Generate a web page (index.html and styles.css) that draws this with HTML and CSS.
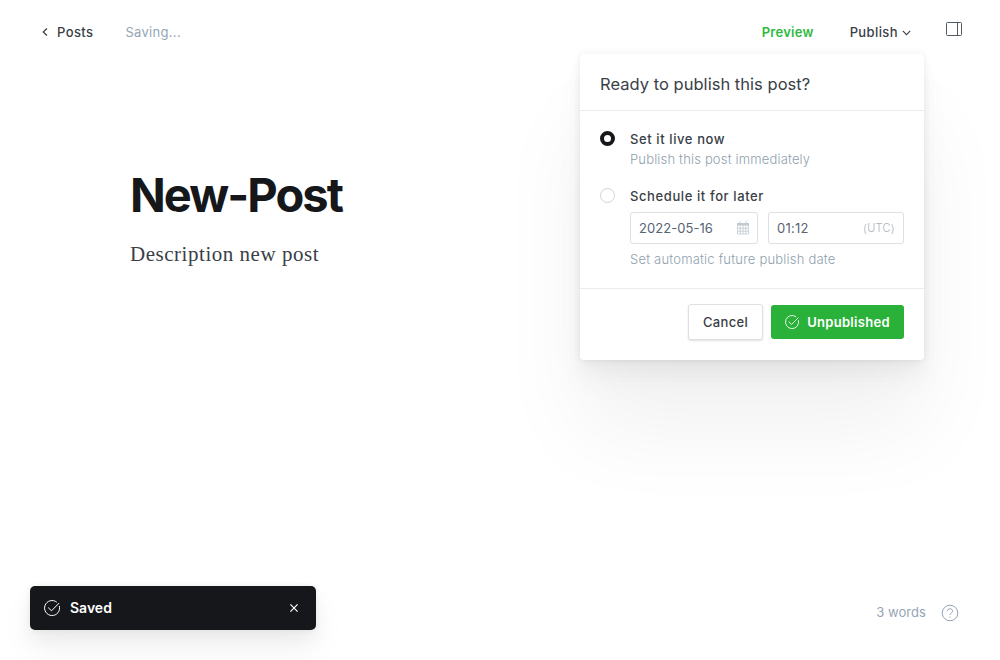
FILE: index.html
```html
<!DOCTYPE html>
<html lang="en">
<head>
<meta charset="utf-8">
<title>New-Post</title>
<link rel="stylesheet" href="styles.css">
</head>
<body>
<div class="editor">
  <header class="topbar">
    <a class="back"><svg width="6" height="8" viewBox="0 0 6 8"><path d="M5 .5 1.2 4 5 7.5"/></svg><span>Posts</span></a>
    <span class="status">Saving...</span>
    <nav class="actions">
      <a class="preview">Preview</a>
      <a class="publish"><span>Publish</span><svg width="9" height="6" viewBox="0 0 9 6"><path d="M.8.9 4.5 4.6 8.2.9"/></svg></a>
      <svg class="sidebar-icon" width="16" height="14" viewBox="0 0 16 14"><rect x=".5" y=".5" width="15" height="13" rx="1"/><path d="M11.5.5v13"/></svg>
    </nav>
  </header>
  <main class="content">
    <h1 class="title">New-Post</h1>
    <p class="description">Description new post</p>
  </main>
  <footer class="bottombar">
    <span class="words">3 words</span>
    <svg class="help" width="18" height="18" viewBox="0 0 18 18"><circle cx="9" cy="9" r="7.8"/><path d="M6.3 7.2C6.3 5.6 7.5 4.8 9 4.8s2.6.9 2.6 2.4C11.6 8.9 9 8.8 9 10.6v.4"/><path d="M9 12.5v1.2"/></svg>
  </footer>
  <section class="menu">
    <h2 class="menu-title">Ready to publish this post?</h2>
    <div class="options">
      <div class="option">
        <span class="radio radio-on"></span>
        <div class="option-body">
          <div class="label">Set it live now</div>
          <div class="hint">Publish this post immediately</div>
        </div>
      </div>
      <div class="option">
        <span class="radio"></span>
        <div class="option-body">
          <div class="label">Schedule it for later</div>
          <div class="fields">
            <div class="field date"><span>2022-05-16</span><svg width="12" height="14" viewBox="0 0 12 14"><path class="cal-head" d="M0 2h12v2.5H0z"/><path d="M.5 2.5h11v10.5H.5zM3 0v3M9 0v3M3.2 4v9M6 4v9M8.8 4v9M1 7.3h10M1 10.2h10"/></svg></div>
            <div class="field time"><span>01:12</span><span class="zone">(UTC)</span></div>
          </div>
          <div class="hint later-hint">Set automatic future publish date</div>
        </div>
      </div>
    </div>
    <div class="buttons">
      <button class="btn cancel">Cancel</button>
      <button class="btn confirm"><svg width="14" height="14" viewBox="0 0 16 16"><path d="M15.3 6A7.5 7.5 0 1 1 12.8 2.2"/><path d="m4.2 7.6 3.3 3.2L15.2 3"/></svg><span>Unpublished</span></button>
    </div>
  </section>
  <aside class="toast">
    <svg class="check" width="16" height="16" viewBox="0 0 16 16"><path d="M15.3 6A7.5 7.5 0 1 1 12.8 2.2"/><path d="m4.2 7.6 3.3 3.2L15.2 3"/></svg>
    <span class="toast-text">Saved</span>
    <svg class="close" width="8" height="8" viewBox="0 0 8 8"><path d="m.4.4 7.2 7.2M7.6.4.4 7.6"/></svg>
  </aside>
</div>
</body>
</html>
```
FILE: styles.css
```css
* { box-sizing: border-box; }
body { margin: 0; background: #fff; font-family: Inter, sans-serif; font-size: 13px; color: #394047; }
svg { fill: none; stroke: currentColor; flex: none; }
h1, h2, p { margin: 0; }
.editor { position: relative; width: 1000px; height: 660px; overflow: hidden; display: flex; flex-direction: column; }
.topbar { display: flex; align-items: center; height: 64px; padding: 0 38px 0 42px; line-height: 20px; }
.back { display: flex; align-items: center; gap: 9px; font-weight: 500; letter-spacing: .4px; }
.back svg { stroke-width: 1.2; }
.status { margin-left: 32px; color: #95a5b5; letter-spacing: .3px; }
.actions { display: flex; align-items: center; margin-left: auto; font-weight: 500; letter-spacing: .4px; }
.preview { color: #30b940; font-weight: 600; letter-spacing: .25px; }
.publish { display: flex; align-items: center; gap: 4px; margin-left: 36px; }
.publish svg { margin-top: 2px; stroke-width: 1.1; }
.sidebar-icon { margin: -6px 0 0 35px; color: #505860; }
.content { flex: 1; padding: 102px 130px 0; }
.title { font-size: 47px; line-height: 58px; font-weight: 700; letter-spacing: -1.95px; color: #15171a; }
.description { margin-top: 16px; font: 21px/28px "Liberation Serif", serif; letter-spacing: .53px; }
.bottombar { display: flex; align-items: center; justify-content: flex-end; gap: 15px; height: 94px; padding-right: 41px; color: #95a5b5; letter-spacing: .05px; }
.words { padding-bottom: 2px; }
.help { stroke-width: 1; }
.menu { position: absolute; left: 580px; top: 54px; width: 344px; height: 306px; background: #fff; border-radius: 4px; box-shadow: 0 0 7px rgba(0,0,0,.08), 0 2px 4px rgba(0,0,0,.01), 0 12px 17px rgba(0,0,0,.03), 0 22px 33px rgba(0,0,0,.03), 0 70px 90px rgba(0,0,0,.055); }
.menu-title { height: 57px; padding: 18px 20px 0; border-bottom: 1px solid #e9ebed; font-size: 16.5px; line-height: 24px; font-weight: 400; letter-spacing: .03px; }
.options { display: flex; flex-direction: column; gap: 16px; height: 178px; padding: 18px 20px 0; border-bottom: 1px solid #e9ebed; }
.option { display: flex; gap: 15px; }
.radio { flex: none; width: 15px; height: 15px; margin-top: 2px; border: 1px solid #ced4d9; border-radius: 50%; }
.radio-on { border: 4px solid #15171a; }
.option-body { flex: 1; }
.label { font-weight: 500; line-height: 20px; letter-spacing: .6px; }
.hint { color: #8f9fae; font-weight: 300; line-height: 21px; letter-spacing: .17px; }
.later-hint { letter-spacing: .2px; }
.fields { display: flex; gap: 10px; margin: 6px 0 5px; }
.field { display: flex; align-items: center; justify-content: space-between; height: 32px; padding: 0 8px; border: 1px solid #dddfe2; border-radius: 3px; color: #566473; letter-spacing: .05px; }
.date { width: 128px; }
.time { width: 136px; letter-spacing: .25px; }
.date svg { color: #c2c9d0; stroke-width: .8; }
.cal-head { fill: currentColor; stroke: none; }
.zone { font-size: 11px; font-weight: 300; color: #abb4be; letter-spacing: .3px; }
.buttons { display: flex; justify-content: flex-end; align-items: center; gap: 8px; padding: 15px 20px 0; }
.btn { display: flex; align-items: center; justify-content: center; height: 34px; padding: 0; border: 0; border-radius: 3px; font: 500 13px/20px Inter, sans-serif; letter-spacing: .3px; }
.cancel { width: 75px; height: 36px; border: 1px solid #dde1e5; background: #fff; color: #394047; box-shadow: 0 1px 2px rgba(0,0,0,.12); }
.confirm { width: 133px; gap: 8px; background: #2ab13a; color: #fff; font-weight: 600; }
.toast { position: absolute; left: 30px; top: 586px; width: 286px; height: 44px; display: flex; align-items: center; padding: 0 18px 0 14px; border-radius: 5px; background: #15171a; color: #fff; box-shadow: 0 0 7px rgba(0,0,0,.06), 0 8px 17px rgba(0,0,0,.04), 0 18px 32px rgba(0,0,0,.06); }
.toast-text { margin: -1px 0 0 10px; font-size: 14px; line-height: 18px; font-weight: 600; }
.close { margin-left: auto; stroke-width: 1.2; }
```
